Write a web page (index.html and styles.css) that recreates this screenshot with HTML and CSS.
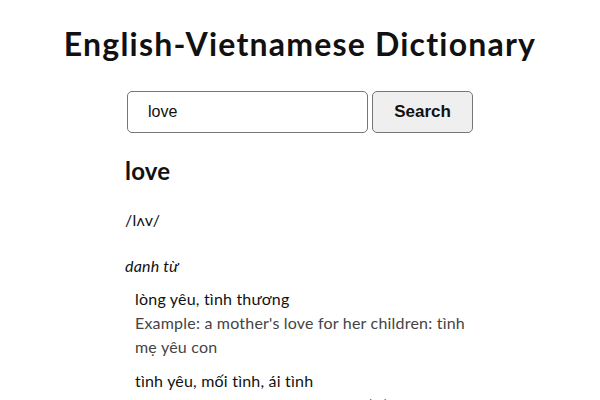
FILE: index.html
```html
<!DOCTYPE html>
<html lang="vi">
<head>
<meta charset="utf-8">
<title>English-Vietnamese Dictionary</title>
<link rel="stylesheet" href="styles.css">
</head>
<body>
<div class="page">
  <h1 class="title">English-Vietnamese Dictionary</h1>
  <form class="search">
    <input class="search-input" type="text" value="love">
    <button class="search-btn" type="button">Search</button>
  </form>
  <div class="entry">
    <h2 class="word">love</h2>
    <p class="phonetic">/lʌv/</p>
    <p class="pos">danh từ</p>
    <div class="sense">
      <div class="meaning">lòng yêu, tình thương</div>
      <div class="example">Example: a mother's love for her children: tình mẹ yêu con</div>
    </div>
    <div class="sense">
      <div class="meaning">tình yêu, mối tình, ái tình</div>
      <div class="example">Example: to be in love with: yêu (ai), phải lòng (ai)</div>
    </div>
  </div>
</div>
</body>
</html>
```
FILE: styles.css
```css
* { box-sizing: border-box; }
body {
  margin: 0;
  background: #fff;
  color: #111;
  font-family: Lato, "Open Sans", sans-serif;
}
.page {
  width: 350px;
  margin: 0 auto;
}
.title {
  margin: 24px -100px 0;
  font-size: 32px;
  line-height: 40px;
  font-weight: 700;
  letter-spacing: 1.2px;
  white-space: nowrap;
  text-align: center;
  color: #111;
}
.search {
  display: flex;
  gap: 4px;
  margin: 27px 0 0 2px;
}
.search-input {
  width: 241px;
  height: 42px;
  padding: 0 20px;
  border: 1px solid #767676;
  border-radius: 5px;
  font-family: "Liberation Sans", Arial, sans-serif;
  font-size: 16px;
  color: #111;
}
.search-btn {
  width: 101px;
  height: 42px;
  border: 1px solid #767676;
  border-radius: 5px;
  background: #efefef;
  font-family: "Liberation Sans", Arial, sans-serif;
  font-size: 17px;
  font-weight: 700;
  color: #111;
}
.entry {
  margin-top: 23px;
  letter-spacing: 0.2px;
}
.word {
  margin: 0;
  font-size: 24px;
  line-height: 30px;
  font-weight: 700;
}
.phonetic {
  margin: 22px 0 0;
  font-size: 16px;
  line-height: 24px;
}
.pos {
  margin: 22px 0 0;
  font-style: italic;
  font-size: 16px;
  line-height: 24px;
}
.sense {
  padding-left: 10px;
  margin-top: 9px;
  font-size: 16px;
  line-height: 24px;
}
.sense + .sense { margin-top: 10px; }
.example { color: #444; }
```
